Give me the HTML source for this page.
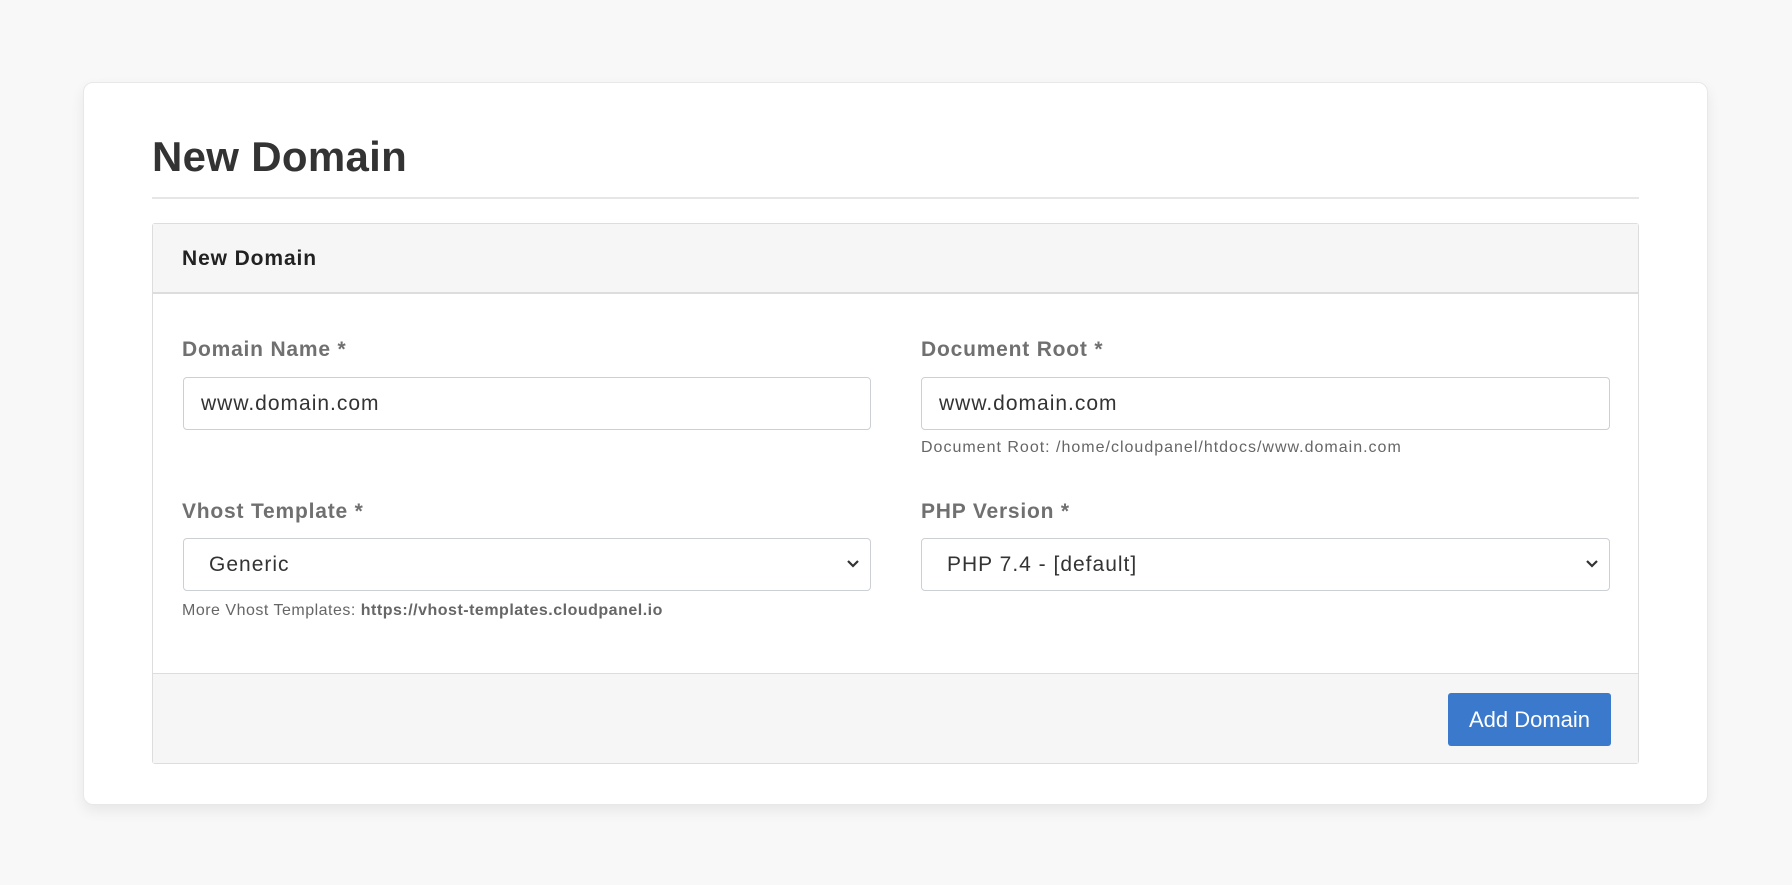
<!DOCTYPE html>
<html><head><meta charset="utf-8"><style>
*{box-sizing:border-box;margin:0;padding:0}
body{width:1792px;height:885px;background:#f8f8f8;font-family:"Liberation Sans",Arial,sans-serif;position:relative;overflow:hidden}
.card{position:absolute;left:83px;top:82px;width:1625px;height:723px;background:#fff;border-radius:10px;border:1px solid #e8e8e8;box-shadow:0 6px 14px rgba(0,0,0,.07)}
h1{position:absolute;left:152px;top:133px;font-size:42px;font-weight:bold;color:#333;line-height:48px;letter-spacing:0.3px}
.hr{position:absolute;left:152px;top:197px;width:1487px;height:2px;background:#e6e6e6}
.panel{position:absolute;left:152px;top:223px;width:1487px;height:541px;border:1px solid #ddd;border-radius:3px;background:#fff}
.ph{position:absolute;left:0;top:0;right:0;height:70px;background:#f6f6f6;border-bottom:2px solid #ddd}
.ph span{position:absolute;left:29px;top:23px;font-size:21px;font-weight:bold;color:#222;letter-spacing:0.9px}
.pf{position:absolute;left:0;bottom:0;right:0;height:90px;background:#f6f6f6;border-top:1px solid #ddd}
.lbl{position:absolute;font-size:21px;font-weight:bold;color:#707070;letter-spacing:0.8px}
.inp{position:absolute;height:53px;border:1px solid #ccd0d4;border-radius:4px;background:#fff;font-size:21px;color:#333;line-height:51px;letter-spacing:1px}
.help{position:absolute;font-size:16px;color:#666;letter-spacing:1px}
.btn{position:absolute;left:1448px;top:693px;width:163px;height:53px;background:#3a79cc;border-radius:3px;color:#fff;font-size:22px;line-height:53px;text-align:center}
.chev{position:absolute;right:10px;top:18px}
</style></head><body>
<div class="card"></div>
<h1>New Domain</h1>
<div class="hr"></div>
<div class="panel"><div class="ph"><span>New Domain</span></div><div class="pf"></div></div>
<div class="lbl" style="left:182px;top:338px">Domain Name *</div>
<div class="inp" style="left:183px;top:377px;width:688px;padding-left:17px">www.domain.com</div>
<div class="lbl" style="left:921px;top:338px">Document Root *</div>
<div class="inp" style="left:921px;top:377px;width:689px;padding-left:17px">www.domain.com</div>
<div class="help" style="left:921px;top:439px">Document Root: /home/cloudpanel/htdocs/www.domain.com</div>
<div class="lbl" style="left:182px;top:500px">Vhost Template *</div>
<div class="inp" style="left:183px;top:538px;width:688px;padding-left:25px">Generic<svg class="chev" width="14" height="14" viewBox="0 0 14 14"><path d="M2 4l5 5 5-5" fill="none" stroke="#333" stroke-width="2.2"/></svg></div>
<div class="help" style="left:182px;top:602px;letter-spacing:0.5px">More Vhost Templates: <b>https://vhost-templates.cloudpanel.io</b></div>
<div class="lbl" style="left:921px;top:500px">PHP Version *</div>
<div class="inp" style="left:921px;top:538px;width:689px;padding-left:25px">PHP 7.4 - [default]<svg class="chev" width="14" height="14" viewBox="0 0 14 14"><path d="M2 4l5 5 5-5" fill="none" stroke="#333" stroke-width="2.2"/></svg></div>
<div class="btn">Add Domain</div>
</body></html>
